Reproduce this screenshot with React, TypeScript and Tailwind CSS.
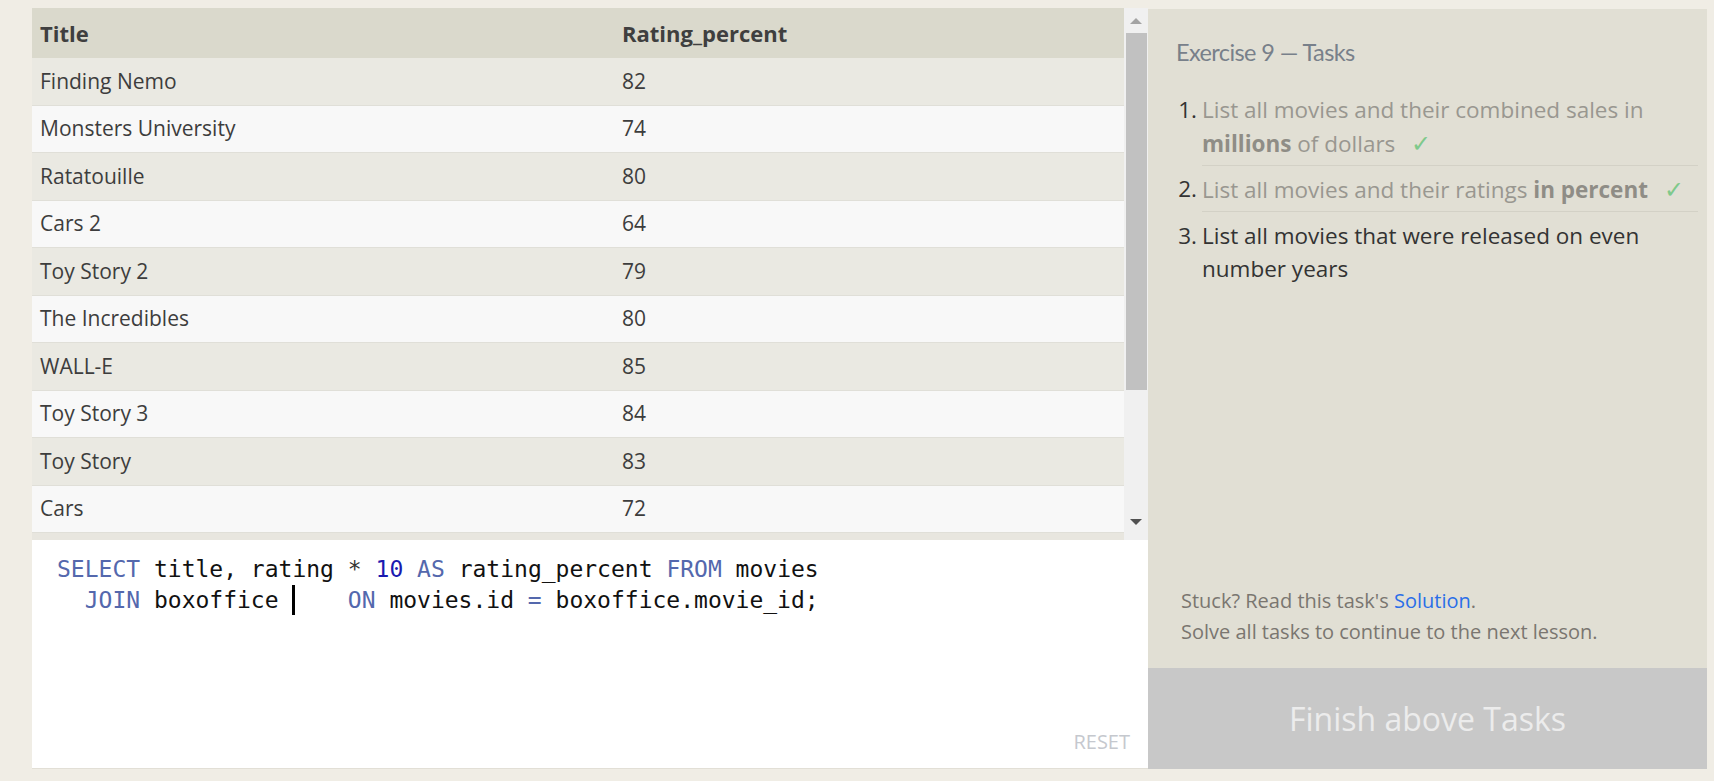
import React from "react";

// only the rows that fit in the visible part of the result grid
const rows: [string, number][] = [
  ["Finding Nemo", 82],
  ["Monsters University", 74],
  ["Ratatouille", 80],
  ["Cars 2", 64],
  ["Toy Story 2", 79],
  ["The Incredibles", 80],
  ["WALL-E", 85],
  ["Toy Story 3", 84],
  ["Toy Story", 83],
  ["Cars", 72],
];

const sans = { fontFamily: '"Open Sans", "Noto Sans", sans-serif' };
const mono = { fontFamily: '"DejaVu Sans Mono", "Liberation Mono", monospace' };

export default function App() {
  return (
    <div className="w-full h-[781px] bg-[#f0ede5] flex pl-[32px] pr-[7px] pt-[8px] pb-[12px]" style={sans}>
      {/* left: results + editor */}
      <div className="w-[1116px] flex flex-col">
        <div className="flex h-[532px]">
          <div className="flex-1 flex flex-col bg-[#e8e6df] overflow-hidden">
            <div className="h-[50px] shrink-0 grid grid-cols-[582px_1fr] items-center bg-[#dad9cc] text-[22px] font-bold text-[#3f3f3f]">
              <div className="pl-[8px]">Title</div>
              <div className="pl-[8px]">Rating_percent</div>
            </div>
            <div className="h-[475px] shrink-0">
              {rows.map(([title, rating], i) => (
                <div
                  key={title}
                  className={
                    "h-[47.5px] grid grid-cols-[582px_1fr] items-center border-b border-[#e0dfd8] text-[21px] text-[#3d3d3d] " +
                    (i % 2 === 0 ? "bg-[#eae9e2]" : "bg-[#f8f8f8]")
                  }
                >
                  <div className="pl-[8px]">{title}</div>
                  <div className="pl-[8px]">{rating}</div>
                </div>
              ))}
            </div>
          </div>
          {/* scrollbar */}
          <div className="w-[24px] shrink-0 bg-[#f0f0f0] flex flex-col items-center">
            <div className="h-[25px] flex items-center justify-center">
              <div className="w-0 h-0 border-l-[6px] border-r-[6px] border-b-[6px] border-l-transparent border-r-transparent border-b-[#a3a3a3]" />
            </div>
            <div className="w-[21px] ml-[1px] h-[357px] bg-[#c1c1c1]" />
            <div className="flex-1" />
            <div className="h-[26px] flex items-start justify-center pt-[5px]">
              <div className="w-0 h-0 border-l-[6px] border-r-[6px] border-t-[6px] border-l-transparent border-r-transparent border-t-[#505050]" />
            </div>
          </div>
        </div>

        {/* editor */}
        <div className="flex-1 bg-white border-b border-[#e2dfd6] relative pt-[14px] pl-[25px]">
          <div className="text-[23px] leading-[30.5px] text-[#111] whitespace-pre" style={mono}>
            <div>
              <span className="text-[#5468ad]">SELECT</span> title, rating <span className="text-[#333]">*</span>{" "}
              <span className="text-[#1a1ab0]">10</span> <span className="text-[#5468ad]">AS</span> rating_percent{" "}
              <span className="text-[#5468ad]">FROM</span> movies
            </div>
            <div>
              {"  "}
              <span className="text-[#5468ad]">JOIN</span> boxoffice{" "}
              <span className="inline-block w-[3px] h-[30px] mr-[-3px] bg-black align-top" />
              {"    "}
              <span className="text-[#5468ad]">ON</span> movies.id <span className="text-[#5468ad]">=</span> boxoffice.movie_id;
            </div>
          </div>
          <button className="absolute right-[18px] bottom-[14px] text-[20px] leading-[24px] text-[#c5c8ce]">RESET</button>
        </div>
      </div>

      {/* right: tasks */}
      <div className="flex-1 mt-[1px] bg-[#e1dfd4] flex flex-col">
        <div className="flex-1 pt-[28px] pl-[28px] pr-[9px]">
          <h2
            className="text-[23.5px] leading-[31px] tracking-[-0.6px] text-[#78808a]"
            style={{ fontFamily: "Lato, sans-serif" }}
          >
            Exercise 9 — Tasks
          </h2>
          <ol className="mt-[17px] text-[22.5px] leading-[33px]">
            <li className="grid grid-cols-[26px_1fr]">
              <span className="pt-[8px] pr-[5px] text-right text-[#333]">1.</span>
              <div className="pt-[8px] pb-[5px] border-b border-[#d3d1c6] text-[#999790]">
                List all movies and their combined sales in
                <br />
                <b className="text-[#8f8d86]">millions</b> of dollars
                <span className="ml-[16px] text-[24px] text-[#7fc98b]">✓</span>
              </div>
            </li>
            <li className="grid grid-cols-[26px_1fr]">
              <span className="pt-[6px] pr-[5px] text-right text-[#333]">2.</span>
              <div className="pt-[6px] pb-[5px] border-b border-[#d3d1c6] text-[#999790]">
                List all movies and their ratings <b className="text-[#8f8d86]">in percent</b>
                <span className="ml-[16px] text-[24px] text-[#7fc98b]">✓</span>
              </div>
            </li>
            <li className="grid grid-cols-[26px_1fr]">
              <span className="pt-[7px] pr-[5px] text-right text-[#333]">3.</span>
              <div className="pt-[7px] pb-[5px] text-[#333]">
                List all movies that were released on even
                <br />
                number years
              </div>
            </li>
          </ol>
        </div>
        <div className="pl-[33px] pb-[21px] text-[20px] leading-[31px] text-[#7a7670]">
          <p>
            Stuck? Read this task's <a className="text-[#2a6ee8]">Solution</a>.
          </p>
          <p>Solve all tasks to continue to the next lesson.</p>
        </div>
        <button className="h-[101px] bg-[#c8c8c8] text-[32px] text-[#ececec]">Finish above Tasks</button>
      </div>
    </div>
  );
}
